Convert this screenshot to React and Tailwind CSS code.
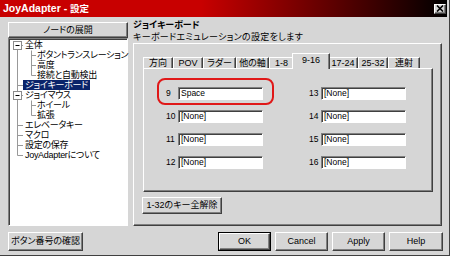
const F = "font-['Liberation_Sans','Noto_Sans_CJK_JP',sans-serif] [font-feature-settings:'palt']";
const raised =
  "border border-t-white border-l-white border-r-[#404040] border-b-[#404040] shadow-[inset_-1px_-1px_#808080]";
const sunken =
  "border border-t-[#808080] border-l-[#808080] border-r-white border-b-white shadow-[inset_1px_1px_#404040]";

const treeRows = [
  { t: "全体", lvl: 0, box: true },
  { t: "ボタントランスレーション", lvl: 1 },
  { t: "高度", lvl: 1 },
  { t: "接続と自動検出", lvl: 1 },
  { t: "ジョイキーボード", lvl: 0, sel: true },
  { t: "ジョイマウス", lvl: 0, box: true },
  { t: "ホイール", lvl: 1 },
  { t: "拡張", lvl: 1 },
  { t: "エレベータキー", lvl: 0 },
  { t: "マクロ", lvl: 0 },
  { t: "設定の保存", lvl: 0 },
  { t: "JoyAdapterについて", lvl: 0 },
];

function TreeLines() {
  const cy = (i) => 6.5 + 10 * i;
  const lines = [];
  lines.push(<line key="v0" x1="8.5" y1={cy(0)} x2="8.5" y2={cy(11)} />);
  [4, 8, 9, 10, 11].forEach((i) =>
    lines.push(<line key={"h" + i} x1="8.5" y1={cy(i)} x2="14" y2={cy(i)} />)
  );
  [0, 5].forEach((i) =>
    lines.push(<line key={"hb" + i} x1="12.5" y1={cy(i)} x2="14" y2={cy(i)} />)
  );
  lines.push(<line key="v1a" x1="22.5" y1={cy(0) + 5} x2="22.5" y2={cy(3)} />);
  lines.push(<line key="v1b" x1="22.5" y1={cy(5) + 5} x2="22.5" y2={cy(7)} />);
  [1, 2, 3, 6, 7].forEach((i) =>
    lines.push(<line key={"h1" + i} x1="22.5" y1={cy(i)} x2="27" y2={cy(i)} />)
  );
  return (
    <svg className="absolute left-0 top-0" width="60" height="130">
      <g stroke="#999999" strokeWidth="1">{lines}</g>
      {[0, 5].map((i) => (
        <g key={"b" + i}>
          <rect x="4.5" y={cy(i) - 4} width="8" height="8" fill="white" stroke="#8c8c8c" />
          <line x1="6.5" y1={cy(i)} x2="10.5" y2={cy(i)} stroke="black" />
        </g>
      ))}
    </svg>
  );
}

function Field({ n, v }) {
  return (
    <div className="flex items-center h-[13px]">
      <span className="w-[12px] text-[8.5px] leading-none">{n}</span>
      <div
        className={`w-[85px] h-[13px] bg-white ${sunken} flex items-center pl-[2px] text-[8.5px] leading-none`}
      >
        {v}
      </div>
    </div>
  );
}

const tabs = [
  { t: "方向", w: "w-[30px]" },
  { t: "POV", w: "w-[30px]" },
  { t: "ラダー", w: "w-[33px]" },
  { t: "他の軸", w: "w-[33px]" },
  { t: "1-8", w: "w-[25px]" },
  { t: "9-16", w: "w-[32px]", sel: true },
  { t: "17-24", w: "w-[30px]" },
  { t: "25-32", w: "w-[30px]" },
  { t: "連射", w: "w-[32px]" },
];

function Btn({ children, className = "" }) {
  return (
    <div
      className={`${raised} bg-[#d6d6d6] flex items-center justify-center text-[9px] leading-none ${className}`}
    >
      {children}
    </div>
  );
}

export default function App() {
  return (
    <div
      className={`relative w-[450px] h-[256px] bg-[#d6d6d6] text-black overflow-hidden flex flex-col border-r border-b border-r-[#404040] border-b-[#404040] ${F}`}
    >
      {/* title bar */}
      <div className="h-[17px] mr-[2px] flex items-center pl-[3px] pr-[1px] bg-[linear-gradient(to_right,#c80000_45%,#000000_100%)]">
        <span className="text-white font-bold text-[10.5px] leading-none">
          JoyAdapter - <span className="text-[9.5px]">設定</span>
        </span>
        <div className={`ml-auto w-[12px] h-[10px] bg-[#d6d6d6] ${raised} flex items-center justify-center`}>
          <svg width="8" height="7" viewBox="0 0 8 7">
            <path d="M1 0.5 L7 6.5 M7 0.5 L1 6.5" stroke="black" strokeWidth="1.6" />
          </svg>
        </div>
      </div>

      {/* main */}
      <div className="h-[209px] flex">
        {/* left */}
        <div className="ml-[8px] w-[120px] pt-[5px] flex flex-col">
          <Btn className="h-[16px] shrink-0">ノードの展開</Btn>
          <div className={`h-[188px] bg-white ${sunken} relative`}>
            <TreeLines />
            <div className="relative pt-[1px] text-[9px] tracking-[-0.3px]">
              {treeRows.map((r, i) => (
                <div key={i} className="h-[10px] flex items-center">
                  <span
                    className={`${r.lvl === 0 ? "ml-[14px]" : "ml-[26px]"} px-[2px] h-[10px] leading-[10px] whitespace-nowrap ${
                      r.sel ? "bg-[#0a246a] text-white" : ""
                    }`}
                  >
                    {r.t}
                  </span>
                </div>
              ))}
            </div>
          </div>
        </div>

        {/* right */}
        <div className="ml-[5px] w-[309px] pt-[2px] flex flex-col">
          <div className="h-[12px] leading-[12px] text-[9px] font-bold whitespace-nowrap">ジョイキーボード</div>
          <div className="h-[12px] leading-[12px] text-[9px] tracking-[0.3px] whitespace-nowrap">キーボードエミュレーションの設定をします</div>
          <div className={`flex-1 ${raised} pl-[9px] pt-[11px]`}>
            {/* tabs */}
            <div className="flex items-end h-[13px] relative z-10">
              {tabs.map((tb, i) =>
                tb.sel ? (
                  <div
                    key={i}
                    className={`${tb.w} -mx-[2px] px-[2px] box-content h-[14px] mb-[-1px] bg-[#d6d6d6] border-l border-t border-r border-l-white border-t-white border-r-[#404040] shadow-[inset_-1px_0_#808080] flex items-start pt-[1px] justify-center text-[9px] leading-[10px] relative z-10`}
                  >
                    {tb.t}
                  </div>
                ) : (
                  <div
                    key={i}
                    className={`${tb.w} h-[11px] border-l border-t border-r border-l-white border-t-white border-r-[#404040] shadow-[inset_-1px_0_#808080] flex items-center justify-center text-[9px] leading-[10px]`}
                  >
                    {tb.t}
                  </div>
                )
              )}
            </div>
            <div className={`w-[290px] h-[124px] relative ${raised} pt-[18px] pl-[22px]`}>
              <div className="absolute left-[13px] top-[9px] w-[117px] h-[27px] border-2 border-[#e01818] rounded-[8px]" />
              <div className="flex gap-[46px]">
                <div className="flex flex-col gap-[10px]">
                  <Field n="9" v="Space" />
                  <Field n="10" v="[None]" />
                  <Field n="11" v="[None]" />
                  <Field n="12" v="[None]" />
                </div>
                <div className="flex flex-col gap-[10px]">
                  <Field n="13" v="[None]" />
                  <Field n="14" v="[None]" />
                  <Field n="15" v="[None]" />
                  <Field n="16" v="[None]" />
                </div>
              </div>
            </div>
            <Btn className="mt-[5px] -ml-[1px] w-[80px] h-[17px]">1-32のキー全解除</Btn>
          </div>
        </div>
      </div>

      {/* bottom buttons */}
      <div className="mt-[6px] h-[19px] flex pl-[8px] pr-[6px]">
        <Btn className="w-[75px] h-[19px]">ボタン番号の確認</Btn>
        <div className="ml-auto flex gap-[4px]">
          <div className="w-[53px] h-[19px] border border-black">
            <Btn className="w-full h-full">OK</Btn>
          </div>
          <Btn className="w-[53px] h-[19px]">Cancel</Btn>
          <Btn className="w-[53px] h-[19px]">Apply</Btn>
          <Btn className="w-[54px] h-[19px]">Help</Btn>
        </div>
      </div>
    </div>
  );
}
